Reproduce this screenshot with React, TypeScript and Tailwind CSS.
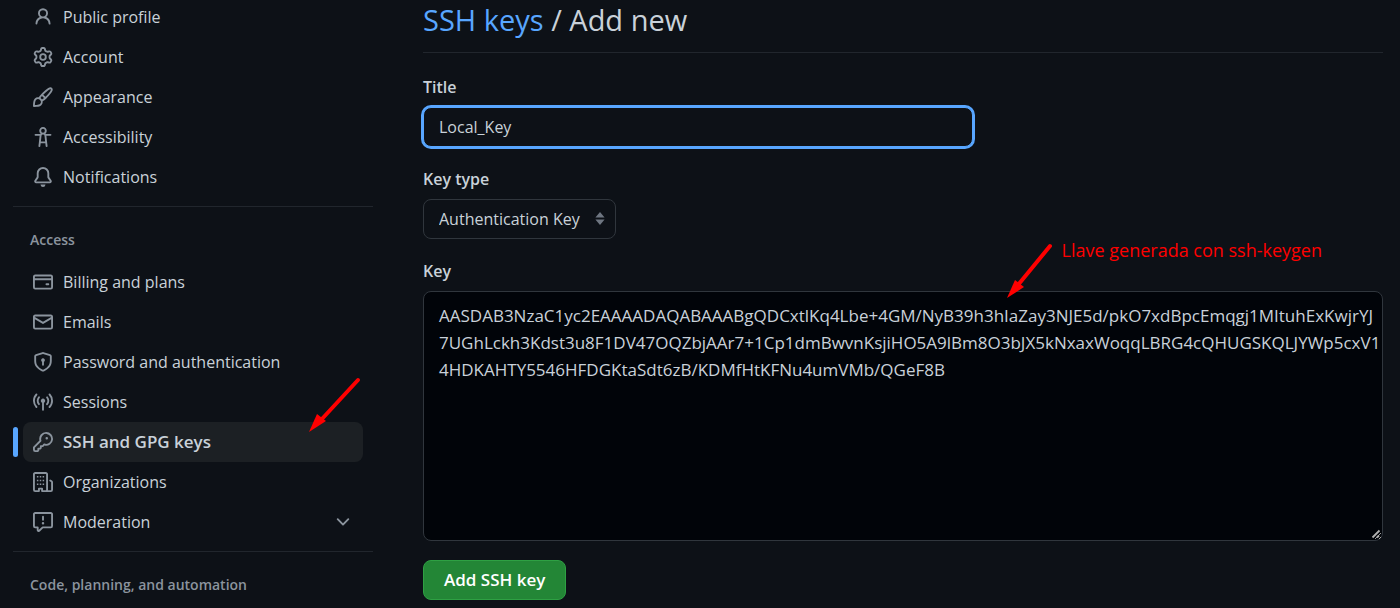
import React from "react";

const ICONS = {
  person: "M10.561 8.073a6.005 6.005 0 0 1 3.432 5.142.75.75 0 1 1-1.498.07 4.5 4.5 0 0 0-8.99 0 .75.75 0 0 1-1.498-.07 6.004 6.004 0 0 1 3.431-5.142 3.999 3.999 0 1 1 5.123 0ZM10.5 5a2.5 2.5 0 1 0-5 0 2.5 2.5 0 0 0 5 0Z",
  gear: "M8 0a8.2 8.2 0 0 1 .701.031C9.444.095 9.99.645 10.16 1.29l.288 1.107c.018.066.079.158.212.224.231.114.454.243.668.386.123.082.233.09.299.071l1.103-.303c.644-.176 1.392.021 1.82.63.27.385.506.792.704 1.218.315.675.111 1.422-.364 1.891l-.814.806c-.049.048-.098.147-.088.294.016.257.016.515 0 .772-.01.147.038.246.088.294l.814.806c.475.469.679 1.216.364 1.891a7.977 7.977 0 0 1-.704 1.217c-.428.61-1.176.807-1.82.63l-1.102-.302c-.067-.019-.177-.011-.3.071a5.909 5.909 0 0 1-.668.386c-.133.066-.194.158-.211.224l-.29 1.106c-.168.646-.715 1.196-1.458 1.26a8.006 8.006 0 0 1-1.402 0c-.743-.064-1.289-.614-1.458-1.26l-.289-1.106c-.018-.066-.079-.158-.212-.224a5.738 5.738 0 0 1-.668-.386c-.123-.082-.233-.09-.299-.071l-1.103.303c-.644.176-1.392-.021-1.82-.63a8.12 8.12 0 0 1-.704-1.218c-.315-.675-.111-1.422.363-1.891l.815-.806c.05-.048.098-.147.088-.294a6.214 6.214 0 0 1 0-.772c.01-.147-.038-.246-.088-.294l-.815-.806C.635 6.045.431 5.298.746 4.623a7.92 7.92 0 0 1 .704-1.217c.428-.61 1.176-.807 1.82-.63l1.102.302c.067.019.177.011.3-.071.214-.143.437-.272.668-.386.133-.066.194-.158.211-.224l.29-1.106C6.009.645 6.556.095 7.299.03 7.53.01 7.764 0 8 0Zm-.571 1.525c-.036.003-.108.036-.137.146l-.289 1.105c-.147.561-.549.967-.998 1.189-.173.086-.34.183-.5.29-.417.278-.97.423-1.529.27l-1.103-.303c-.109-.03-.175.016-.195.045-.22.312-.412.644-.573.99-.014.031-.021.11.059.19l.815.806c.411.406.562.957.53 1.456a4.709 4.709 0 0 0 0 .582c.032.499-.119 1.05-.53 1.456l-.815.806c-.081.08-.073.159-.059.19.162.346.353.677.573.989.02.03.085.076.195.046l1.102-.303c.56-.153 1.113-.008 1.53.27.161.107.328.204.501.29.447.222.85.629.997 1.189l.289 1.105c.029.109.101.143.137.146a6.6 6.6 0 0 0 1.142 0c.036-.003.108-.036.137-.146l.289-1.105c.147-.561.549-.967.998-1.189.173-.086.34-.183.5-.29.417-.278.97-.423 1.529-.27l1.103.303c.109.029.175-.016.195-.045.22-.313.411-.644.573-.99.014-.031.021-.11-.059-.19l-.815-.806c-.411-.406-.562-.957-.53-1.456a4.709 4.709 0 0 0 0-.582c-.032-.499.119-1.05.53-1.456l.815-.806c.081-.08.073-.159.059-.19a6.464 6.464 0 0 0-.573-.989c-.02-.03-.085-.076-.195-.046l-1.102.303c-.56.153-1.113.008-1.53-.27a4.44 4.44 0 0 0-.501-.29c-.447-.222-.85-.629-.997-1.189l-.289-1.105c-.029-.11-.101-.143-.137-.146a6.6 6.6 0 0 0-1.142 0ZM11 8a3 3 0 1 1-6 0 3 3 0 0 1 6 0ZM9.5 8a1.5 1.5 0 1 0-3.001.001A1.5 1.5 0 0 0 9.5 8Z",
  brush: "M11.134 1.535c.7-.509 1.416-.942 2.076-1.155.649-.21 1.463-.267 2.069.34.603.601.568 1.411.368 2.07-.202.668-.624 1.39-1.125 2.096-1.011 1.424-2.496 2.987-3.775 4.249-1.098 1.084-2.132 1.839-3.04 2.3a3.744 3.744 0 0 1-1.055 3.217c-.431.431-1.065.691-1.657.861-.614.177-1.294.287-1.914.357A21.151 21.151 0 0 1 .797 16H.743l.007-.75H.749L.742 16a.75.75 0 0 1-.743-.742l.743-.008-.742.007v-.054a21.25 21.25 0 0 1 .13-2.284c.067-.647.187-1.287.358-1.914.17-.591.43-1.226.86-1.657a3.746 3.746 0 0 1 3.227-1.054c.466-.893 1.225-1.907 2.314-2.982 1.271-1.255 2.833-2.75 4.245-3.777ZM1.62 13.089c-.051.464-.086.929-.104 1.395.466-.018.932-.053 1.396-.104a10.511 10.511 0 0 0 1.668-.309c.526-.151.856-.325 1.011-.48a2.25 2.25 0 1 0-3.182-3.182c-.155.155-.329.485-.48 1.01a10.515 10.515 0 0 0-.309 1.67Zm10.396-10.34c-1.224.89-2.605 2.189-3.822 3.384l1.718 1.718c1.21-1.205 2.51-2.597 3.387-3.833.47-.662.78-1.227.912-1.662.134-.444.032-.551.009-.575h-.001V1.78c-.014-.014-.113-.113-.548.027-.432.14-.995.462-1.655.942Zm-4.832 7.266-.001.001a9.859 9.859 0 0 0 1.63-1.142L7.155 7.216a9.7 9.7 0 0 0-1.161 1.607c.482.302.889.71 1.19 1.192Z",
  accessibility: "M9.923 5.302c.063.063.122.129.178.198H14A.75.75 0 0 1 14 7h-3.3l.578 5.163.362 2.997a.75.75 0 0 1-1.49.18L9.868 13H6.132l-.282 2.34a.75.75 0 0 1-1.49-.18l.362-2.997L5.3 7H2a.75.75 0 0 1 0-1.5h3.9a2.54 2.54 0 0 1 .176-.198 3 3 0 1 1 3.847 0ZM9.2 7.073h-.001a1.206 1.206 0 0 0-2.398 0L6.305 11.5h3.39ZM9.5 3a1.5 1.5 0 1 0-3.001.001A1.5 1.5 0 0 0 9.5 3Z",
  bell: "M8 16a2 2 0 0 0 1.985-1.75c.017-.137-.097-.25-.235-.25h-3.5c-.138 0-.252.113-.235.25A2 2 0 0 0 8 16ZM3 5a5 5 0 0 1 10 0v2.947c0 .05.015.098.042.139l1.703 2.555A1.519 1.519 0 0 1 13.482 13H2.518a1.516 1.516 0 0 1-1.263-2.36l1.703-2.554A.255.255 0 0 0 3 7.947Zm5-3.5A3.5 3.5 0 0 0 4.5 5v2.947c0 .346-.102.683-.294.97l-1.703 2.556a.017.017 0 0 0-.003.01l.001.006c0 .002.002.004.004.006l.006.004.007.001h10.964l.007-.001.006-.004.004-.006.001-.007a.017.017 0 0 0-.003-.01l-1.703-2.554a1.745 1.745 0 0 1-.294-.97V5A3.5 3.5 0 0 0 8 1.5Z",
  card: "M10.75 9a.75.75 0 0 0 0 1.5h1.5a.75.75 0 0 0 0-1.5h-1.5ZM0 3.75C0 2.784.784 2 1.75 2h12.5c.966 0 1.75.784 1.75 1.75v8.5A1.75 1.75 0 0 1 14.25 14H1.75A1.75 1.75 0 0 1 0 12.25ZM14.5 6.5h-13v5.75c0 .138.112.25.25.25h12.5a.25.25 0 0 0 .25-.25Zm0-2.75a.25.25 0 0 0-.25-.25H1.75a.25.25 0 0 0-.25.25V5h13Z",
  mail: "M1.75 2h12.5c.966 0 1.75.784 1.75 1.75v8.5A1.75 1.75 0 0 1 14.25 14H1.75A1.75 1.75 0 0 1 0 12.25v-8.5C0 2.784.784 2 1.75 2ZM1.5 12.251c0 .138.112.25.25.25h12.5a.25.25 0 0 0 .25-.25V5.809L8.38 9.397a.75.75 0 0 1-.76 0L1.5 5.809v6.442Zm13-8.181v-.32a.25.25 0 0 0-.25-.25H1.75a.25.25 0 0 0-.25.25v.32L8 7.88Z",
  shield: "m8.533.133 5.25 1.68A1.75 1.75 0 0 1 15 3.48V7c0 1.566-.32 3.182-1.303 4.682-.983 1.498-2.585 2.813-5.032 3.855a1.697 1.697 0 0 1-1.33 0c-2.447-1.042-4.049-2.357-5.032-3.855C1.32 10.182 1 8.566 1 7V3.48a1.755 1.755 0 0 1 1.217-1.667l5.25-1.68a1.748 1.748 0 0 1 1.066 0Zm-.61 1.429.001.001-5.25 1.68a.251.251 0 0 0-.174.237V7c0 1.36.275 2.666 1.057 3.859.784 1.194 2.121 2.342 4.366 3.298a.196.196 0 0 0 .154 0c2.245-.957 3.582-2.103 4.366-3.297C13.225 9.666 13.5 8.358 13.5 7V3.48a.25.25 0 0 0-.174-.238l-5.25-1.68a.25.25 0 0 0-.153 0ZM9.5 6.5c0 .536-.286 1.032-.75 1.3v2.45a.75.75 0 0 1-1.5 0V7.8A1.5 1.5 0 1 1 9.5 6.5Z",
  broadcast: "M8.75 8.582v5.668a.75.75 0 0 1-1.5 0V8.582a1.75 1.75 0 1 1 1.5 0Zm3.983-7.125a.75.75 0 0 1 1.06.026A7.976 7.976 0 0 1 16 7c0 2.139-.84 4.083-2.207 5.517a.75.75 0 1 1-1.086-1.034A6.474 6.474 0 0 0 14.5 7a6.474 6.474 0 0 0-1.793-4.483.75.75 0 0 1 .026-1.06Zm-9.466 0c.3.286.312.76.026 1.06A6.474 6.474 0 0 0 1.5 7a6.47 6.47 0 0 0 1.793 4.483.75.75 0 0 1-1.086 1.034A7.973 7.973 0 0 1 0 7c0-2.139.84-4.083 2.207-5.517a.75.75 0 0 1 1.06-.026Zm8.556 2.321A4.988 4.988 0 0 1 13 7a4.988 4.988 0 0 1-1.177 3.222.75.75 0 1 1-1.146-.967A3.487 3.487 0 0 0 11.5 7c0-.86-.309-1.645-.823-2.255a.75.75 0 0 1 1.146-.967Zm-6.492.958A3.48 3.48 0 0 0 4.5 7a3.48 3.48 0 0 0 .823 2.255.75.75 0 0 1-1.146.967A4.981 4.981 0 0 1 3 7a4.982 4.982 0 0 1 1.188-3.236.75.75 0 1 1 1.143.972Z",
  key: "M10.5 0a5.499 5.499 0 1 1-1.288 10.848l-.932.932a.749.749 0 0 1-.53.22H7v.75a.749.749 0 0 1-.22.53l-.5.5a.749.749 0 0 1-.53.22H5v.75a.749.749 0 0 1-.22.53l-.5.5a.749.749 0 0 1-.53.22h-2A1.75 1.75 0 0 1 0 14.25v-2c0-.199.079-.389.22-.53l4.932-4.932A5.5 5.5 0 0 1 10.5 0Zm-4 5.5c-.001.431.069.86.205 1.269a.75.75 0 0 1-.181.768L1.5 12.56v1.69c0 .138.112.25.25.25h1.69l.06-.06v-1.19a.75.75 0 0 1 .75-.75h1.19l.06-.06v-1.19a.75.75 0 0 1 .75-.75h1.19l1.023-1.025a.75.75 0 0 1 .768-.18A4 4 0 1 0 6.5 5.5ZM11 6a1 1 0 1 1 0-2 1 1 0 0 1 0 2Z",
  organization: "M1.75 16A1.75 1.75 0 0 1 0 14.25V1.75C0 .784.784 0 1.75 0h8.5C11.216 0 12 .784 12 1.75v12.5c0 .085-.006.168-.018.25h2.268a.25.25 0 0 0 .25-.25V8.285a.25.25 0 0 0-.111-.208l-1.055-.703a.749.749 0 1 1 .832-1.248l1.055.703c.487.325.779.871.779 1.456v5.965A1.75 1.75 0 0 1 14.25 16h-3.5a.766.766 0 0 1-.197-.026c-.099.017-.2.026-.303.026h-3a.75.75 0 0 1-.75-.75V14h-1v1.25a.75.75 0 0 1-.75.75Zm-.25-1.75c0 .138.112.25.25.25H4v-1.25a.75.75 0 0 1 .75-.75h2.5a.75.75 0 0 1 .75.75v1.25h2.25a.25.25 0 0 0 .25-.25V1.75a.25.25 0 0 0-.25-.25h-8.5a.25.25 0 0 0-.25.25ZM3.1 3.2h1.2v1.1H3.1Zm2.3 0h1.2v1.1H5.4Zm2.3 0h1.2v1.1H7.7ZM3.1 6.2h1.2v1.1H3.1Zm2.3 0h1.2v1.1H5.4Zm2.3 0h1.2v1.1H7.7ZM3.1 9.2h1.2v1.1H3.1Zm2.3 0h1.2v1.1H5.4Zm2.3 0h1.2v1.1H7.7Z",
  report: "M0 1.75C0 .784.784 0 1.75 0h12.5C15.216 0 16 .784 16 1.75v9.5A1.75 1.75 0 0 1 14.25 13H8.06l-2.573 2.573A1.458 1.458 0 0 1 3 14.543V13H1.75A1.75 1.75 0 0 1 0 11.25Zm1.75-.25a.25.25 0 0 0-.25.25v9.5c0 .138.112.25.25.25h2a.75.75 0 0 1 .75.75v2.19l2.72-2.72a.749.749 0 0 1 .53-.22h6.5a.25.25 0 0 0 .25-.25v-9.5a.25.25 0 0 0-.25-.25Zm7 2.25v2.5a.75.75 0 0 1-1.5 0v-2.5a.75.75 0 0 1 1.5 0ZM9 9a1 1 0 1 1-2 0 1 1 0 0 1 2 0Z",
  chevron: "M12.78 5.22a.749.749 0 0 1 0 1.06l-4.25 4.25a.749.749 0 0 1-1.06 0L3.22 6.28a.749.749 0 1 1 1.06-1.06L8 8.939l3.72-3.719a.749.749 0 0 1 1.06 0Z",
};

type IconName = keyof typeof ICONS;

function Icon({ name }: { name: IconName }) {
  return (
    <svg viewBox="0 0 16 16" className="size-5 shrink-0 fill-[#8b949e]" aria-hidden="true">
      <path d={ICONS[name]} />
    </svg>
  );
}

function NavItem({ icon, label }: { icon: IconName; label: string }) {
  return (
    <li>
      <a href="#" className="mx-2.5 flex h-10 items-center gap-2.5 rounded-lg px-2.5 hover:bg-[#1c2024]">
        <Icon name={icon} />
        {label}
      </a>
    </li>
  );
}

function ActiveNavItem({ icon, label }: { icon: IconName; label: string }) {
  return (
    <li className="flex items-center gap-[5px]">
      <span className="h-[30px] w-[5px] rounded-sm bg-[#58a6ff]" />
      <a
        href="#"
        aria-current="page"
        className="relative mr-2.5 flex h-10 flex-1 items-center gap-2.5 rounded-lg bg-[#1c2024] px-2.5 text-[17px] font-semibold"
      >
        <Icon name={icon} />
        {label}
        <svg viewBox="0 0 60 60" className="absolute -top-12 right-0 size-[60px]" fill="#ff0000" aria-hidden="true">
          <path d="M55 6 18 46" stroke="#ff0000" strokeWidth="4" strokeLinecap="round" />
          <path d="M6 58 14 40 23 47Z" />
        </svg>
      </a>
    </li>
  );
}

function ExpandableNavItem({ icon, label }: { icon: IconName; label: string }) {
  return (
    <li className="flex px-2.5">
      <button type="button" className="flex h-10 flex-1 items-center gap-2.5 rounded-lg px-2.5 text-left">
        <Icon name={icon} />
        <span className="flex-1">{label}</span>
        <Icon name="chevron" />
      </button>
    </li>
  );
}

const KEY_TEXT = [
  "AASDAB3NzaC1yc2EAAAADAQABAAABgQDCxtlKq4Lbe+4GM/NyB39h3hIaZay3NJE5d/pkO7xdBpcEmqgj1MItuhExKwjrYJ",
  "7UGhLckh3Kdst3u8F1DV47OQZbjAAr7+1Cp1dmBwvnKsjiHO5A9lBm8O3bJX5kNxaxWoqqLBRG4cQHUGSKQLJYWp5cxV1",
  "4HDKAHTY5546HFDGKtaSdt6zB/KDMfHtKFNu4umVMb/QGeF8B",
].join("\n");

export default function App() {
  return (
    <div className="flex min-h-screen gap-[50px] overflow-hidden bg-[#0d1117] pr-[17px] pl-[13px] font-['Open_Sans','Noto_Sans',sans-serif] text-base text-[#c9d1d9]">
      <nav className="-mt-[3px] w-[360px] shrink-0">
        <ul>
          <NavItem icon="person" label="Public profile" />
          <NavItem icon="gear" label="Account" />
          <NavItem icon="brush" label="Appearance" />
          <NavItem icon="accessibility" label="Accessibility" />
          <NavItem icon="bell" label="Notifications" />
        </ul>
        <hr className="mt-[9px] border-[#21262d]" />
        <h2 className="mt-[21px] mb-2.5 px-[17px] text-sm leading-6 font-semibold text-[#8b949e]">Access</h2>
        <ul>
          <NavItem icon="card" label="Billing and plans" />
          <NavItem icon="mail" label="Emails" />
          <NavItem icon="shield" label="Password and authentication" />
          <NavItem icon="broadcast" label="Sessions" />
          <ActiveNavItem icon="key" label="SSH and GPG keys" />
          <NavItem icon="organization" label="Organizations" />
          <ExpandableNavItem icon="report" label="Moderation" />
        </ul>
        <hr className="mt-[9px] border-[#21262d]" />
        <h2 className="mt-[21px] px-[17px] text-sm leading-6 font-semibold text-[#8b949e]">
          Code, planning, and automation
        </h2>
      </nav>

      <main className="min-w-0 flex-1">
        <h1 className="border-b border-[#21262d] pb-3 text-[29px] leading-10">
          <a href="#" className="text-[#58a6ff]">SSH keys</a> / Add new
        </h1>

        <form className="flex flex-col items-start" onSubmit={(e) => e.preventDefault()}>
          <label htmlFor="title" className="mt-[22px] leading-6 font-semibold">Title</label>
          <input
            id="title"
            type="text"
            defaultValue="Local_Key"
            className="mt-2 h-10 w-full max-w-[550px] rounded-lg border border-[#58a6ff] bg-[#0d1117] px-[15px] ring-2 ring-[#58a6ff] outline-none"
          />

          <label htmlFor="key-type" className="mt-5 leading-6 font-semibold">Key type</label>
          <div className="relative mt-2">
            <select
              id="key-type"
              className="h-10 w-[193px] appearance-none rounded-lg border border-[#30363d] bg-[#0d1117] pl-[15px]"
            >
              <option>Authentication Key</option>
            </select>
            <svg viewBox="0 0 10 14" className="pointer-events-none absolute top-[13px] right-[11px] h-3.5 w-2.5 fill-[#6e7681]" aria-hidden="true">
              <path d="M5 0 9.6 5.5H.4ZM5 13 9.6 7.5H.4Z" />
            </svg>
          </div>

          <label htmlFor="key" className="mt-5 leading-6 font-semibold">Key</label>
          <div className="relative mt-2 w-full">
            <textarea
              id="key"
              spellCheck={false}
              defaultValue={KEY_TEXT}
              className="block h-[250px] w-full resize-y overflow-hidden rounded-lg border border-[#30363d] bg-[#010409] py-2.5 pr-0 pl-[15px] text-[17px] leading-[27px] whitespace-pre"
            />
            <svg viewBox="0 0 10 10" className="pointer-events-none absolute right-0.5 bottom-0.5 size-2.5 stroke-[#b0b0b0]" aria-hidden="true">
              <path d="M1.500 8.500 8.500 1.500M6 8.500 8 6.500" strokeWidth="1.8" />
            </svg>
            <svg viewBox="0 0 60 60" className="absolute -top-[51px] right-[323px] size-[60px]" fill="#ff0000" aria-hidden="true">
              <path d="M50 6 18 45" stroke="#ff0000" strokeWidth="4" strokeLinecap="round" />
              <path d="M7 58 15 40 24 47Z" />
            </svg>
            <p className="absolute -top-[53px] right-[61px] text-lg leading-6 whitespace-nowrap text-[#ff0000]">
              Llave generada con ssh-keygen
            </p>
          </div>

          <button
            type="submit"
            className="mt-[19px] h-10 rounded-lg border border-[#2ea043] bg-[#238636] px-5 text-[17px] font-semibold text-white"
          >
            Add SSH key
          </button>
        </form>
      </main>
    </div>
  );
}
